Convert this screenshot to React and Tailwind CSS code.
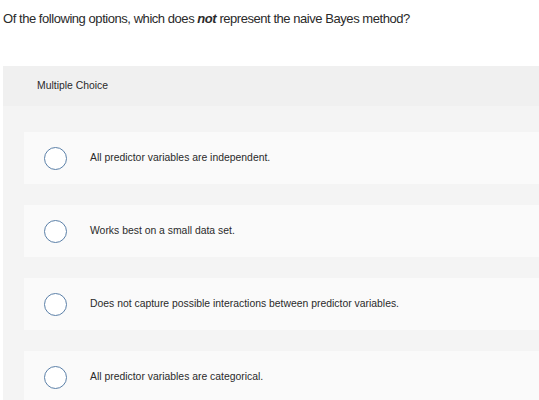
import React from "react";

const options = [
  "All predictor variables are independent.",
  "Works best on a small data set.",
  "Does not capture possible interactions between predictor variables.",
  "All predictor variables are categorical.",
];

export default function App() {
  return (
    <div className="w-[539px] h-[400px] overflow-hidden bg-white text-[#2a2a2a]" style={{ fontFamily: '"Liberation Sans", Arial, sans-serif' }}>
      <div className="pl-[3px] pt-[11px] h-[66px] text-[13px] leading-[16px] tracking-[-0.45px]">
        Of the following options, which does <b><i>not</i></b> represent the naive Bayes method?
      </div>
      <div className="ml-[3px] bg-[#f4f4f4]">
        <div className="h-[40px] bg-[#f0f0f0] pl-[34px] flex items-center text-[10.4px]">Multiple Choice</div>
        <div className="pl-[21px] pt-[26px] flex flex-col gap-[21px]">
          {options.map((o) => (
            <div key={o} className="h-[52px] bg-[#fafafa] flex items-center">
              <span className="ml-[20px] w-[23px] h-[23px] rounded-full border-[1.5px] border-[#5b80a8] bg-white shrink-0" />
              <span className="ml-[23px] text-[10.4px]">{o}</span>
            </div>
          ))}
        </div>
      </div>
    </div>
  );
}
